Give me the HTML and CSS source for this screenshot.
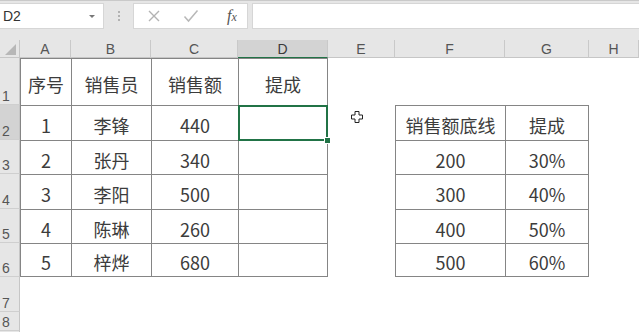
FILE: index.html
```html
<!DOCTYPE html>
<html lang="zh-CN">
<head>
<meta charset="utf-8">
<title>Sheet</title>
<link rel="stylesheet" href="styles.css">
</head>
<body>
<div class="app">
  <div class="toolbar">
    <div class="namebox"><span class="name">D2</span><span class="caret"></span></div>
    <div class="grip"><i></i><i></i><i></i></div>
    <div class="fbuttons">
      <svg class="ico" width="14" height="14" viewBox="0 0 14 14"><path d="M2 2 L12 12 M12 2 L2 12" stroke="#b3b3b3" stroke-width="1.4" fill="none"/></svg>
      <svg class="ico" width="16" height="14" viewBox="0 0 16 14"><path d="M1.5 7.5 L5.5 12 L14.5 1.5" stroke="#b8b8b8" stroke-width="1.5" fill="none"/></svg>
      <span class="fx"><i>f</i><i class="x">x</i></span>
    </div>
    <div class="finput"></div>
  </div>

  <div class="sheet">
    <!-- header row -->
    <div class="corner"><span class="tri"></span></div>
    <div class="ch">A</div>
    <div class="ch">B</div>
    <div class="ch">C</div>
    <div class="ch sel">D</div>
    <div class="ch">E</div>
    <div class="ch">F</div>
    <div class="ch">G</div>
    <div class="ch">H</div>

    <!-- row 1 -->
    <div class="rh">1</div>
    <div class="c t">序号</div>
    <div class="c t">销售员</div>
    <div class="c t">销售额</div>
    <div class="c t r">提成</div>
    <div class="c"></div>
    <div class="c"></div>
    <div class="c"></div>
    <div class="c"></div>

    <!-- row 2 -->
    <div class="rh sel">2</div>
    <div class="c t">1</div>
    <div class="c t">李锋</div>
    <div class="c t">440</div>
    <div class="c t r active"></div>
    <div class="c"></div>
    <div class="c t">销售额底线</div>
    <div class="c t r">提成</div>
    <div class="c"></div>

    <!-- row 3 -->
    <div class="rh">3</div>
    <div class="c t">2</div>
    <div class="c t">张丹</div>
    <div class="c t">340</div>
    <div class="c t r"></div>
    <div class="c"></div>
    <div class="c t">200</div>
    <div class="c t r">30%</div>
    <div class="c"></div>

    <!-- row 4 -->
    <div class="rh">4</div>
    <div class="c t">3</div>
    <div class="c t">李阳</div>
    <div class="c t">500</div>
    <div class="c t r"></div>
    <div class="c"></div>
    <div class="c t">300</div>
    <div class="c t r">40%</div>
    <div class="c"></div>

    <!-- row 5 -->
    <div class="rh">5</div>
    <div class="c t">4</div>
    <div class="c t">陈琳</div>
    <div class="c t">260</div>
    <div class="c t r"></div>
    <div class="c"></div>
    <div class="c t">400</div>
    <div class="c t r">50%</div>
    <div class="c"></div>

    <!-- row 6 -->
    <div class="rh">6</div>
    <div class="c t b">5</div>
    <div class="c t b">梓烨</div>
    <div class="c t b">680</div>
    <div class="c t r b"></div>
    <div class="c"></div>
    <div class="c t b">500</div>
    <div class="c t r b">60%</div>
    <div class="c"></div>

    <!-- row 7 -->
    <div class="rh">7</div>
    <div class="c"></div><div class="c"></div><div class="c"></div><div class="c"></div>
    <div class="c"></div><div class="c"></div><div class="c"></div><div class="c"></div>

    <!-- row 8 -->
    <div class="rh">8</div>
    <div class="c"></div><div class="c"></div><div class="c"></div><div class="c"></div>
    <div class="c"></div><div class="c"></div><div class="c"></div><div class="c"></div>

    <!-- row 9 (partial) -->
    <div class="rh"></div>
    <div class="c"></div><div class="c"></div><div class="c"></div><div class="c"></div>
    <div class="c"></div><div class="c"></div><div class="c"></div><div class="c"></div>
  </div>

  <svg class="cursor" width="12" height="12" viewBox="0 0 12 12"><path d="M4 0.5 H8 V4 H11.5 V8 H8 V11.5 H4 V8 H0.5 V4 H4 Z" fill="#fff" stroke="#222" stroke-width="1"/></svg>
</div>
</body>
</html>
```

FILE: styles.css
```css
html, body {
  margin: 0;
  padding: 0;
  background: #fff;
}

.app {
  position: relative;
  width: 639px;
  height: 332px;
  overflow: hidden;
  font-family: "Noto Sans CJK SC", "Noto Sans", sans-serif;
}

/* ---------- formula bar ---------- */
.toolbar {
  box-sizing: border-box;
  height: 40px;
  display: flex;
  align-items: flex-start;
  padding-top: 2px;
  background: #e6e6e6;
  border-top: 1px solid #c9c9c9;
}

.namebox {
  box-sizing: border-box;
  width: 104px;
  height: 26px;
  background: #fff;
  border: 1px solid #d6d6d6;
  border-left: none;
  display: flex;
  align-items: center;
  justify-content: space-between;
  padding: 0 8px 0 3px;
}

.name {
  font-family: "Liberation Sans", Arial, sans-serif;
  font-size: 14px;
  color: #333;
}

.caret {
  width: 0;
  height: 0;
  border-left: 3px solid transparent;
  border-right: 3px solid transparent;
  border-top: 3px solid #777;
}

.grip {
  width: 29px;
  height: 26px;
  display: flex;
  flex-direction: column;
  align-items: center;
  justify-content: center;
  gap: 2px;
}

.grip i {
  width: 2px;
  height: 2px;
  background: #a0a0a0;
  border-radius: 1px;
}

.fbuttons {
  box-sizing: border-box;
  width: 115px;
  height: 26px;
  background: #fff;
  border: 1px solid #d6d6d6;
  display: flex;
  align-items: center;
  padding-left: 13px;
  gap: 22px;
}

.fx {
  font-family: "Liberation Serif", "Times New Roman", serif;
  font-size: 16px;
  color: #555;
  margin-left: 6px;
}

.fx .x {
  font-size: 12px;
}

.finput {
  box-sizing: border-box;
  flex: 1;
  height: 26px;
  margin-left: 4px;
  background: #fff;
  border: 1px solid #d6d6d6;
  border-right: none;
}

/* ---------- sheet grid ---------- */
.sheet {
  display: grid;
  grid-template-columns: 20px 51px 80px 87px 90px 67px 110px 84px 1fr;
  grid-template-rows: 18px 47px 35px 34px 35px 34px 34px 35px 19px 1fr;
  height: 292px;
}

.corner {
  position: relative;
  box-sizing: border-box;
  background: #e6e6e6;
  border-right: 1px solid #c6c6c6;
  border-bottom: 1px solid #c6c6c6;
}

.tri {
  position: absolute;
  right: 3px;
  bottom: 2px;
  width: 0;
  height: 0;
  border-left: 11px solid transparent;
  border-bottom: 11px solid #b7b7b7;
}

.ch {
  box-sizing: border-box;
  background: #e6e6e6;
  border-right: 1px solid #c9c9c9;
  border-bottom: 1px solid #c6c6c6;
  display: flex;
  align-items: center;
  justify-content: center;
  font-family: "Liberation Sans", Arial, sans-serif;
  font-size: 14px;
  color: #555;
  padding-top: 1px;
}

.ch.sel {
  background: #d3d3d3;
  border-bottom: 1px solid #217346;
  color: #3a3a3a;
}

.rh {
  box-sizing: border-box;
  background: #e6e6e6;
  border-right: 1px solid #c6c6c6;
  border-bottom: 1px solid #cfcfcf;
  display: flex;
  align-items: flex-end;
  padding: 0 0 1px 2px;
  font-family: "Liberation Sans", Arial, sans-serif;
  font-size: 14px;
  line-height: 1;
  color: #555;
}

.rh.sel {
  background: #d3d3d3;
}

.c {
  box-sizing: border-box;
  display: flex;
  align-items: center;
  justify-content: center;
  padding-top: 4px;
  font-size: 18px;
  color: #3c3c3c;
  background: #fff;
}

.c.t {
  border-left: 1px solid #858585;
  border-top: 1px solid #858585;
}

.c.r {
  border-right: 1px solid #858585;
}

.c.b {
  border-bottom: 1px solid #858585;
}

.c.active {
  position: relative;
}

.c.active::before {
  content: "";
  position: absolute;
  left: -1px;
  top: -1px;
  right: -1px;
  bottom: -1px;
  border: 2px solid #217346;
}

.c.active::after {
  content: "";
  position: absolute;
  right: -4px;
  bottom: -4px;
  width: 5px;
  height: 5px;
  background: #217346;
  border: 1px solid #fff;
}

.cursor {
  position: absolute;
  left: 351px;
  top: 111px;
}
```
